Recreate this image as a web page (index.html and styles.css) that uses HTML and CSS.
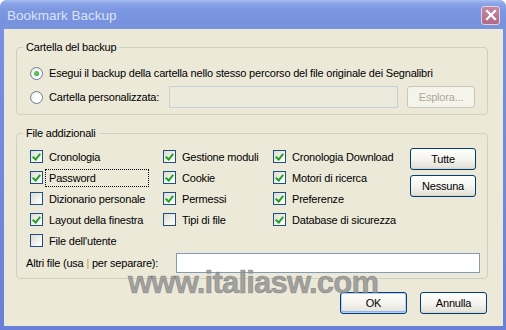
FILE: index.html
```html
<!DOCTYPE html>
<html lang="it">
<head>
    <meta charset="UTF-8">
    <meta name="viewport" content="width=device-width, initial-scale=1.0">
    <title>Bookmark Backup</title>
    <link rel="stylesheet" href="styles.css">
</head>
<body>
    <div class="window">
        <div class="titlebar">
            <span class="title">Bookmark Backup</span>
            <span class="close">
                <svg width="12" height="12" viewBox="0 0 12 12"><path d="M2 2 L10 10 M10 2 L2 10" stroke="#fff" stroke-width="2.2" stroke-linecap="square"/></svg>
            </span>
        </div>
        <div class="client">
            <fieldset class="group group-folder">
                <legend>Cartella del backup</legend>
                <div class="row">
                    <span class="radio checked"></span>
                    <span class="label">Esegui il backup della cartella nello stesso percorso del file originale dei Segnalibri</span>
                </div>
                <div class="row">
                    <span class="radio"></span>
                    <span class="label custom-label">Cartella personalizzata:</span>
                    <span class="textbox disabled path"></span>
                    <button class="button browse" disabled>Esplora...</button>
                </div>
            </fieldset>

            <fieldset class="group group-files">
                <legend>File addizionali</legend>
                <div class="files">
                    <div class="check-col col-1">
                        <div class="check-row"><span class="check on"></span><span class="label">Cronologia</span></div>
                        <div class="check-row"><span class="check on"></span><span class="label focused">Password</span></div>
                        <div class="check-row"><span class="check"></span><span class="label">Dizionario personale</span></div>
                        <div class="check-row"><span class="check on"></span><span class="label">Layout della finestra</span></div>
                        <div class="check-row"><span class="check"></span><span class="label">File dell'utente</span></div>
                    </div>
                    <div class="check-col col-2">
                        <div class="check-row"><span class="check on"></span><span class="label">Gestione moduli</span></div>
                        <div class="check-row"><span class="check on"></span><span class="label">Cookie</span></div>
                        <div class="check-row"><span class="check on"></span><span class="label">Permessi</span></div>
                        <div class="check-row"><span class="check"></span><span class="label">Tipi di file</span></div>
                    </div>
                    <div class="check-col col-3">
                        <div class="check-row"><span class="check on"></span><span class="label">Cronologia Download</span></div>
                        <div class="check-row"><span class="check on"></span><span class="label">Motori di ricerca</span></div>
                        <div class="check-row"><span class="check on"></span><span class="label">Preferenze</span></div>
                        <div class="check-row"><span class="check on"></span><span class="label">Database di sicurezza</span></div>
                    </div>
                    <div class="side-buttons">
                        <button class="button">Tutte</button>
                        <button class="button">Nessuna</button>
                    </div>
                </div>
                <div class="other-row">
                    <span class="other-label">Altri file (usa <span class="pipe">|</span> per separare):</span>
                    <span class="textbox other"></span>
                </div>
            </fieldset>

            <div class="footer">
                <button class="button default">OK</button>
                <button class="button">Annulla</button>
            </div>

            <div class="watermark">www.italiasw.com</div>
        </div>
    </div>
</body>
</html>
```

FILE: styles.css
```css
body {
    margin: 0;
    font-family: "Liberation Sans", Arial, sans-serif;
    font-size: 11px;
    letter-spacing: -0.2px;
    color: #000;
}
.window {
    width: 506px;
    height: 330px;
    box-sizing: border-box;
    display: flex;
    flex-direction: column;
    background: linear-gradient(#7a92e0, #6a80d8);
    border-radius: 7px 7px 0 0;
    overflow: hidden;
}
.titlebar {
    height: 29px;
    flex: 0 0 29px;
    display: flex;
    align-items: center;
    justify-content: space-between;
    padding: 0 6px 0 7px;
    background: linear-gradient(#a9c0f2 0px, #8aa5e8 3px, #7d98e1 10px, #7791de 22px, #7a94df 29px);
}
.title {
    font-size: 13.5px;
    letter-spacing: 0;
    color: #d9e3f8;
    margin-top: 1px;
}
.close {
    width: 19px;
    height: 19px;
    margin-top: 1px;
    box-sizing: border-box;
    border: 1px solid #e6d0dc;
    border-radius: 3px;
    background: linear-gradient(#c08aa4, #b06a88);
    display: flex;
    align-items: center;
    justify-content: center;
}
.client {
    position: relative;
    flex: 1;
    margin: 0 3px 4px 4px;
    background: #ece9d8;
    padding: 12px 15px 0 12px;
}
.group {
    margin: 0;
    padding: 0 10px 0 13px;
    border: 1px solid #d0d0bf;
    border-radius: 4px;
}
.group legend {
    margin-left: -7px;
    padding: 0 3px;
    line-height: 13px;
    color: #000;
}
.group-folder {
    padding-top: 8px;
    padding-bottom: 6px;
}
.group-files {
    margin-top: 12px;
    padding-top: 6px;
    padding-bottom: 5px;
    padding-right: 7px;
}
.row {
    height: 22px;
    display: flex;
    align-items: center;
}
.row + .row {
    margin-top: 2px;
}
.radio {
    width: 13px;
    height: 13px;
    box-sizing: border-box;
    border: 1px solid #6a7f96;
    border-radius: 50%;
    background: radial-gradient(circle at 65% 65%, #fff 0, #fff 35%, #e4e3dc 100%);
    display: flex;
    align-items: center;
    justify-content: center;
    flex: 0 0 13px;
}
.radio.checked::after {
    content: "";
    width: 5px;
    height: 5px;
    border-radius: 50%;
    background: radial-gradient(circle at 40% 40%, #6fd26f, #1e9c1e);
}
.label {
    margin-left: 2px;
    padding: 0 3px;
    border: 1px dotted transparent;
    line-height: 16px;
    white-space: nowrap;
}
.custom-label {
    width: 124px;
    box-sizing: border-box;
}
.textbox {
    display: block;
    box-sizing: border-box;
    border: 1px solid #7f9db9;
    background: #fff;
}
.textbox.disabled {
    border-color: #c5cfd9;
    background: #ebeadb;
}
.path {
    width: 229px;
    height: 22px;
}
.button {
    font-family: "Liberation Sans", Arial, sans-serif;
    font-size: 11px;
    letter-spacing: -0.2px;
    color: #000;
    height: 22px;
    padding: 0;
    box-sizing: border-box;
    border: 1px solid #003c74;
    border-radius: 3px;
    background: linear-gradient(#ffffff, #f5f4ef 50%, #e6e4da 90%, #d6d0c5);
}
.button:disabled {
    border-color: #c9c7ba;
    color: #aca899;
    background: #f5f4ea;
}
.browse {
    width: 68px;
    margin-left: 9px;
}
.files {
    display: flex;
}
.col-1 {
    width: 133px;
}
.col-2 {
    width: 110px;
}
.col-3 {
    width: 137px;
}
.check-row {
    height: 21px;
    display: flex;
    align-items: center;
}
.check {
    width: 13px;
    height: 13px;
    flex: 0 0 13px;
    box-sizing: border-box;
    border: 1px solid #1c5180;
    background: linear-gradient(135deg, #dcdbd3, #f7f7f4 70%, #fff);
    position: relative;
}
.check.on::after {
    content: "";
    position: absolute;
    left: 2px;
    top: 1px;
    width: 3px;
    height: 6px;
    border: solid #21a121;
    border-width: 0 2px 2px 0;
    transform: translate(1px, 0) rotate(40deg);
}
.focused {
    width: 104px;
    box-sizing: border-box;
    border-color: #000;
    line-height: 16px;
}
.side-buttons {
    display: flex;
    flex-direction: column;
    gap: 5px;
    padding-top: 2px;
}
.side-buttons .button {
    width: 66px;
}
.other-row {
    display: flex;
    align-items: center;
    margin: 2px 0 0 -4px;
    height: 20px;
}
.other-label {
    width: 150px;
    white-space: nowrap;
}
.pipe {
    color: #c89a30;
}
.other {
    width: 304px;
    height: 20px;
}
.footer {
    display: flex;
    justify-content: flex-end;
    gap: 13px;
    margin-top: 13px;
    padding-right: 1px;
}
.footer .button {
    width: 67px;
}
.button.default {
    border-color: #003c74;
    box-shadow: inset 0 0 0 1px #b9d1fa, inset 0 -1px 0 1px #8db2f0;
}
.watermark {
    position: absolute;
    left: 124px;
    top: 244px;
    font-size: 31px;
    line-height: 20px;
    font-weight: bold;
    letter-spacing: -0.8px;
    color: rgba(105, 105, 105, 0.62);
    -webkit-text-stroke: 0.6px rgba(105, 105, 105, 0.62);
    text-shadow: 0 0 1px rgba(255, 255, 255, 0.6);
    white-space: nowrap;
}
```
